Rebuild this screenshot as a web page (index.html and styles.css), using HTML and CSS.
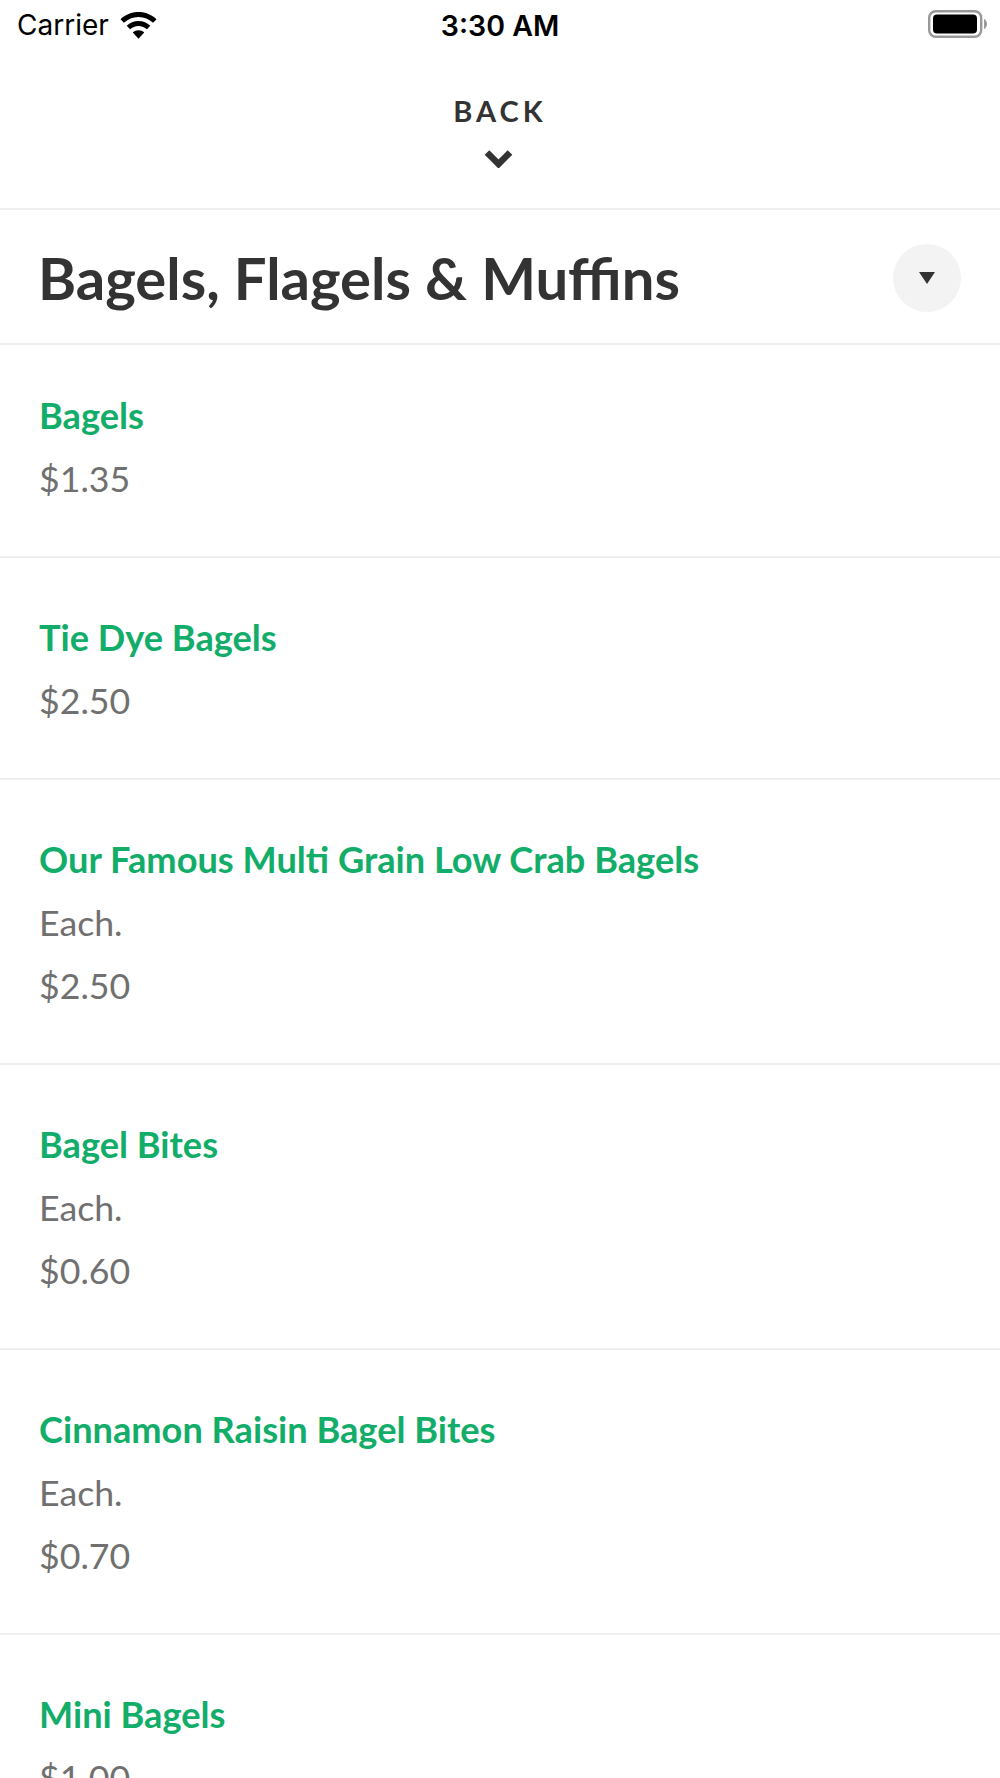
FILE: index.html
```html
<!DOCTYPE html>
<html lang="en">
<head>
<meta charset="utf-8">
<title>Bagels, Flagels &amp; Muffins</title>
<link rel="stylesheet" href="styles.css">
</head>
<body>
<div class="screen">
  <div class="status-bar">
    <div class="status-left">
      <span class="carrier">Carrier</span>
      <svg class="wifi" viewBox="0 0 37 27" aria-hidden="true"><path d="M18.500 0C11.500 0 5.200 2.700.5 7.200l3.400 3.600C7.800 7.100 12.900 4.900 18.500 4.900S29.200 7.100 33.100 10.800l3.400-3.600C31.800 2.700 25.500 0 18.500 0z"/><path d="M18.500 9c-4.500 0-8.700 1.800-11.800 4.700l3.400 3.600c2.200-2.100 5.200-3.400 8.400-3.400s6.200 1.300 8.400 3.400l3.400-3.600C27.200 10.800 23 9 18.500 9z"/><path d="M18.500 18.200c-2.200 0-4.200.8-5.700 2.200l5.700 6.300 5.700-6.300c-1.500-1.400-3.500-2.200-5.700-2.200z"/></svg>
    </div>
    <span class="clock">3:30 AM</span>
    <svg class="battery" viewBox="0 0 60 28" aria-hidden="true"><rect class="battery-shell" x="2.200" y="1.200" width="52" height="25.600" rx="6.500"/><rect x="6" y="4.500" width="44" height="19" rx="4"/><path class="battery-nub" d="M57 9v10c1.800-.7 3-2.900 3-5s-1.200-4.300-3-5z"/></svg>
  </div>
  <div class="back-bar">
    <span class="back-label">BACK</span>
    <svg class="chevron" viewBox="0 0 29 19" aria-hidden="true"><path d="M3 3.500l11.500 11.500L26 3.500"/></svg>
  </div>
  <div class="category">
    <h1 class="category-title">Bagels, Flagels &amp; Muffins</h1>
    <div class="toggle"><span class="triangle"></span></div>
  </div>
  <ul class="menu">
    <li class="item first">
      <div class="name">Bagels</div>
      <div class="price">$1.35</div>
    </li>
    <li class="item">
      <div class="name">Tie Dye Bagels</div>
      <div class="price">$2.50</div>
    </li>
    <li class="item">
      <div class="name">Our Famous Multi Grain Low Crab Bagels</div>
      <div class="desc">Each.</div>
      <div class="price">$2.50</div>
    </li>
    <li class="item">
      <div class="name">Bagel Bites</div>
      <div class="desc">Each.</div>
      <div class="price">$0.60</div>
    </li>
    <li class="item">
      <div class="name">Cinnamon Raisin Bagel Bites</div>
      <div class="desc">Each.</div>
      <div class="price">$0.70</div>
    </li>
    <li class="item">
      <div class="name">Mini Bagels</div>
      <div class="price">$1.00</div>
    </li>
  </ul>
</div>
</body>
</html>
```
FILE: styles.css
```css
* { box-sizing: border-box; }
html, body { margin: 0; padding: 0; background: #fff; }
.screen {
  width: 1000px;
  height: 1778px;
  overflow: hidden;
  background: #fff;
  font-family: Lato, "Liberation Sans", sans-serif;
}
.status-bar {
  height: 50px;
  display: grid;
  grid-template-columns: 1fr auto 1fr;
  align-items: center;
  padding: 0 13px;
  color: #000;
  font-family: Inter, "Liberation Sans", sans-serif;
}
.status-left { display: flex; align-items: center; gap: 11px; padding-left: 4px; }
.carrier { font-size: 28px; }
.wifi { width: 37px; height: 27px; fill: #000; }
.clock { font-size: 28.500px; font-weight: 600; margin-top: 1px; }
.battery { width: 60px; height: 28px; justify-self: end; fill: #000; margin-bottom: 2px; }
.battery-shell { fill: none; stroke: #999; stroke-width: 2.400; }
.battery-nub { fill: #999; }
.back-bar {
  height: 160px;
  border-bottom: 2px solid #efefef;
  display: flex;
  flex-direction: column;
  align-items: center;
  padding-top: 45px;
  color: #333;
}
.back-label { font-size: 29px; font-weight: 700; letter-spacing: 4px; line-height: 32px; }
.chevron { width: 29px; height: 19px; margin: 22px 3px 0 0; fill: none; stroke: #333; stroke-width: 6.500; }
.category {
  height: 135px;
  border-bottom: 2px solid #efefef;
  display: flex;
  align-items: center;
  justify-content: space-between;
  padding: 2px 39px 0 38px;
}
.category-title { margin: 0; font-size: 58px; font-weight: 700; color: #333; line-height: 68px; }
.toggle {
  width: 68px;
  height: 68px;
  border-radius: 50%;
  background: #f3f3f3;
  display: flex;
  align-items: center;
  justify-content: center;
}
.triangle {
  width: 0;
  height: 0;
  border-left: 8.500px solid transparent;
  border-right: 8.500px solid transparent;
  border-top: 12px solid #333;
}
.menu { list-style: none; margin: 0; padding: 0; }
.item {
  padding: 55px 39px 53.500px;
  border-bottom: 2px solid #efefef;
}
.item.first { padding-top: 46px; padding-bottom: 53.500px; }
.name { font-size: 36.200px; font-weight: 700; line-height: 48px; color: #13ad6a; }
.desc, .price { font-size: 35.700px; line-height: 48px; color: #707070; }
.desc { margin-top: 16px; }
.price { margin-top: 15.500px; }
.desc + .price { margin-top: 14.500px; }
```
